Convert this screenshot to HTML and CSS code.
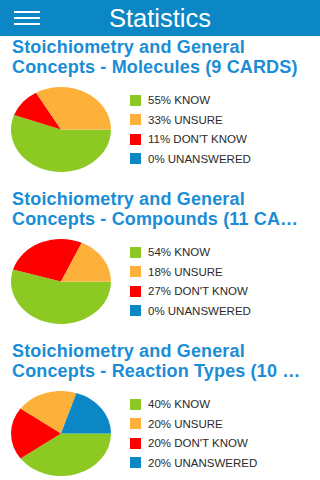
FILE: index.html
```html
<!DOCTYPE html>
<html lang="en">
<head>
    <meta charset="UTF-8">
    <meta name="viewport" content="width=device-width, initial-scale=1.0">
    <title>Statistics</title>
    <link rel="stylesheet" href="styles.css">
</head>
<body>
    <header class="topbar">
        <button class="menu-btn" aria-label="Menu">
            <span></span><span></span><span></span>
        </button>
        <h1>Statistics</h1>
    </header>

    <main class="stats">
        <section class="deck">
            <h2 class="deck-title">
                <span class="deck-subject">Stoichiometry and General</span>
                <span class="deck-name">Concepts - Molecules (9 CARDS)</span>
            </h2>
            <div class="deck-chart">
                <svg class="pie" viewBox="-1 -1 2 2" preserveAspectRatio="none">
                    <path class="know" d="M0,0 L1,0 A1,1 0 1,1 -0.9397,-0.3420 Z"/>
                    <path class="dont" d="M0,0 L-0.9397,-0.3420 A1,1 0 0,1 -0.5,-0.8660 Z"/>
                    <path class="unsure" d="M0,0 L-0.5,-0.8660 A1,1 0 0,1 1,0 Z"/>
                </svg>
                <ul class="legend">
                    <li><span class="swatch know"></span>55% KNOW</li>
                    <li><span class="swatch unsure"></span>33% UNSURE</li>
                    <li><span class="swatch dont"></span>11% DON'T KNOW</li>
                    <li><span class="swatch unanswered"></span>0% UNANSWERED</li>
                </ul>
            </div>
        </section>

        <section class="deck">
            <h2 class="deck-title">
                <span class="deck-subject">Stoichiometry and General</span>
                <span class="deck-name">Concepts - Compounds (11 CARDS)</span>
            </h2>
            <div class="deck-chart">
                <svg class="pie" viewBox="-1 -1 2 2" preserveAspectRatio="none">
                    <path class="know" d="M0,0 L1,0 A1,1 0 1,1 -0.9595,-0.2817 Z"/>
                    <path class="dont" d="M0,0 L-0.9595,-0.2817 A1,1 0 0,1 0.4154,-0.9096 Z"/>
                    <path class="unsure" d="M0,0 L0.4154,-0.9096 A1,1 0 0,1 1,0 Z"/>
                </svg>
                <ul class="legend">
                    <li><span class="swatch know"></span>54% KNOW</li>
                    <li><span class="swatch unsure"></span>18% UNSURE</li>
                    <li><span class="swatch dont"></span>27% DON'T KNOW</li>
                    <li><span class="swatch unanswered"></span>0% UNANSWERED</li>
                </ul>
            </div>
        </section>

        <section class="deck">
            <h2 class="deck-title">
                <span class="deck-subject">Stoichiometry and General</span>
                <span class="deck-name">Concepts - Reaction Types (10 CARDS)</span>
            </h2>
            <div class="deck-chart">
                <svg class="pie" viewBox="-1 -1 2 2" preserveAspectRatio="none">
                    <path class="know" d="M0,0 L1,0 A1,1 0 0,1 -0.8090,0.5878 Z"/>
                    <path class="dont" d="M0,0 L-0.8090,0.5878 A1,1 0 0,1 -0.8090,-0.5878 Z"/>
                    <path class="unsure" d="M0,0 L-0.8090,-0.5878 A1,1 0 0,1 0.3090,-0.9511 Z"/>
                    <path class="unanswered" d="M0,0 L0.3090,-0.9511 A1,1 0 0,1 1,0 Z"/>
                </svg>
                <ul class="legend">
                    <li><span class="swatch know"></span>40% KNOW</li>
                    <li><span class="swatch unsure"></span>20% UNSURE</li>
                    <li><span class="swatch dont"></span>20% DON'T KNOW</li>
                    <li><span class="swatch unanswered"></span>20% UNANSWERED</li>
                </ul>
            </div>
        </section>
    </main>
</body>
</html>
```

FILE: styles.css
```css
body {
    margin: 0;
    font-family: "Liberation Sans", Arial, sans-serif;
    background: #ffffff;
    overflow: hidden;
}

.topbar {
    display: grid;
    grid-template-columns: 1fr auto 1fr;
    align-items: center;
    height: 36px;
    background: #0b87c5;
    color: #ffffff;
}

.topbar h1 {
    margin: 0;
    font-size: 25.5px;
    font-weight: normal;
    line-height: 36px;
}

.menu-btn {
    display: flex;
    flex-direction: column;
    gap: 4px;
    justify-self: start;
    width: 26px;
    margin-left: 14px;
    padding: 0;
    border: none;
    background: none;
}

.menu-btn span {
    display: block;
    height: 2px;
    width: 100%;
    background: #ffffff;
}

.stats {
    padding-top: 1px;
}

.deck {
    height: 152px;
    padding: 0 12px 0 11px;
}

.deck-title {
    margin: 0;
    padding-left: 1px;
    font-size: 18px;
    font-weight: bold;
    letter-spacing: 0.15px;
    line-height: 20px;
    color: #1a8dd6;
}

.deck-subject,
.deck-name {
    display: block;
    white-space: nowrap;
    overflow: hidden;
    text-overflow: ellipsis;
}

.deck-chart {
    display: flex;
    align-items: center;
    gap: 19px;
    margin-top: 10px;
}

.pie {
    width: 100px;
    height: 85px;
    flex-shrink: 0;
}

.legend {
    list-style: none;
    margin: 0;
    padding: 0;
}

.legend li {
    display: flex;
    align-items: center;
    gap: 7px;
    height: 19.5px;
    font-size: 11.5px;
    color: #2a2a2a;
}

.swatch {
    width: 11px;
    height: 11px;
}

.know { fill: #8cc922; background: #8cc922; }
.unsure { fill: #fdb03a; background: #fdb03a; }
.dont { fill: #fe0000; background: #fe0000; }
.unanswered { fill: #0a87c4; background: #0a87c4; }
```
